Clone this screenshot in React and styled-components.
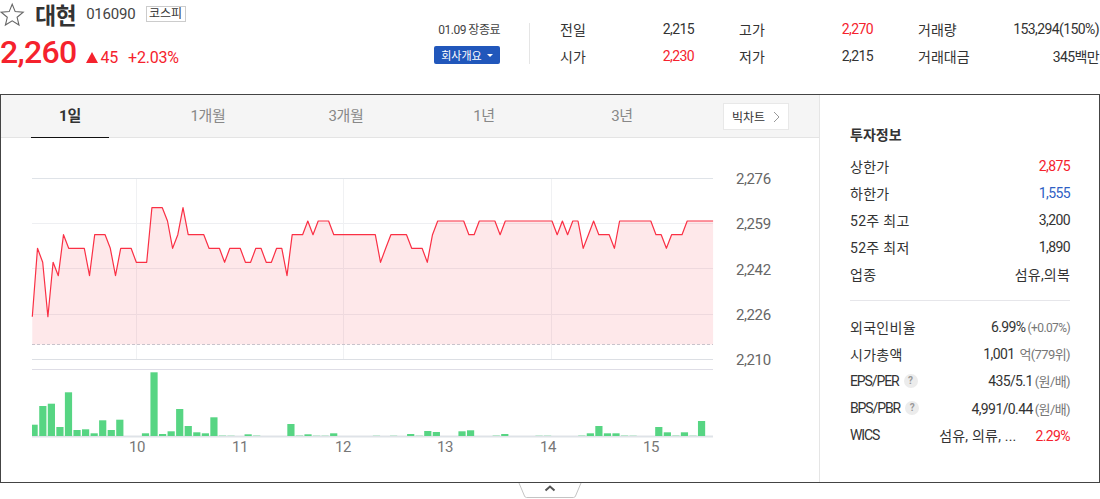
import styled, { createGlobalStyle } from 'styled-components'

const GlobalStyle = createGlobalStyle`
  html, body {
    margin: 0;
    padding: 0;
    background: #fff;
    overflow: hidden;
  }
  body {
    font-family: Roboto, "Noto Sans CJK KR", sans-serif;
    color: #333;
  }
  * { box-sizing: border-box; }
`;

const Page = styled.div`
  width: 1100px;
  height: 499px;
`;

const Header = styled.header`
  height: 94px;
  display: flex;
  align-items: flex-start;
`;

const Summary = styled.div`
  width: 434px;
  display: flex;
  flex-direction: column;
`;

const TitleRow = styled.div`
  height: 28px;
  display: flex;
  align-items: center;
`;

const Name = styled.h1`
  margin: 0 0 0 10px;
  font-size: 23px;
  font-weight: 700;
  letter-spacing: -0.6px;
  color: #333;
`;

const Code = styled.span`
  margin-left: 10px;
  font-size: 15px;
  letter-spacing: -0.2px;
  color: #444;
`;

const MarketTag = styled.span`
  margin-left: 10px;
  width: 40px;
  height: 16px;
  border: 1px solid #ccc;
  font-size: 12px;
  line-height: 14px;
  text-align: center;
  color: #333;
`;

const PriceRow = styled.div`
  margin-top: 3px;
  display: flex;
  align-items: baseline;
  color: #f5222d;
`;

const Price = styled.strong`
  font-size: 32px;
  font-weight: 500;
  line-height: 42px;
  letter-spacing: -0.7px;
`;

const Triangle = styled.i`
  margin-left: 10px;
  margin-right: 2px;
  width: 0;
  height: 0;
  border-left: 6px solid transparent;
  border-right: 6px solid transparent;
  border-bottom: 11px solid #f5222d;
`;

const Delta = styled.span`
  margin-right: ${(props) => props.gap || 0}px;
  font-size: 16px;
  letter-spacing: -0.2px;
`;

const Status = styled.div`
  width: 66px;
  padding-top: 21px;
  display: flex;
  flex-direction: column;
  align-items: flex-end;
`;

const StatusText = styled.span`
  font-size: 12px;
  line-height: 18px;
  white-space: nowrap;
  letter-spacing: -0.5px;
  color: #444;
`;

const CompanyButton = styled.button`
  margin-top: 7px;
  width: 66px;
  height: 18px;
  padding: 0;
  border: 0;
  border-radius: 2px;
  background: #2157bb;
  color: #fff;
  font-family: inherit;
  font-size: 11px;
  display: flex;
  align-items: center;
  justify-content: center;
  gap: 5px;
`;

const Caret = styled.i`
  width: 0;
  height: 0;
  border-left: 3px solid transparent;
  border-right: 3px solid transparent;
  border-top: 3px solid #fff;
`;

const Quotes = styled.div`
  margin: 23px 0 0 29px;
  padding: 0 0 2px 30px;
  height: 41px;
  border-left: 1px solid #e5e5e5;
  display: grid;
  grid-template-columns: 134px 134px 181px;
  column-gap: 45px;
  grid-auto-rows: 27px;
  align-content: center;
`;

const Quote = styled.div`
  display: flex;
  justify-content: space-between;
  align-items: center;
  font-size: 14px;
  white-space: nowrap;
`;

const Value = styled.span`
  letter-spacing: -0.6px;
  color: ${(props) => props.color || '#333'};
  margin-left: ${(props) => props.$gap || 0}px;
`;

const Board = styled.section`
  height: 389px;
  border: 1px solid #444;
  display: flex;
`;

const ChartPanel = styled.div`
  width: 819px;
  border-right: 1px solid #e5e5e5;
`;

const Tabs = styled.nav`
  height: 43px;
  position: relative;
  background: #f5f5f5;
  border-bottom: 1px solid #e4e4e4;
  display: flex;
`;

const Tab = styled.a`
  width: 138px;
  height: 43px;
  font-size: 15px;
  line-height: 42px;
  text-align: center;
  letter-spacing: -0.3px;
  color: ${(props) => (props.$active ? '#333' : '#888')};
  font-weight: ${(props) => (props.$active ? 700 : 400)};
  position: relative;
  &::after {
    content: '';
    display: ${(props) => (props.$active ? 'block' : 'none')};
    position: absolute;
    left: 30px;
    right: 30px;
    bottom: 0;
    height: 1px;
    background: #111;
  }
`;

const BigChart = styled.a`
  position: absolute;
  left: 722px;
  top: 8px;
  width: 66px;
  height: 27px;
  background: #fff;
  border: 1px solid #e8e8e8;
  font-size: 12px;
  color: #333;
  display: flex;
  align-items: center;
  justify-content: center;
  gap: 8px;
`;

const ChartSvg = styled.svg`
  display: block;
  width: 818px;
  height: 344px;
`;

const AxisText = styled.text`
  font-family: Roboto, sans-serif;
  font-size: 15px;
  letter-spacing: -0.4px;
  fill: ${(props) => props.color};
`;

const InfoPanel = styled.aside`
  flex: 1;
  padding: 28px 29px 0 30px;
`;

const InfoTitle = styled.h3`
  margin: 0 0 5px;
  font-size: 14px;
  line-height: 24px;
  font-weight: 700;
  color: #333;
`;

const InfoGroup = styled.div`
  padding-bottom: ${(props) => (props.$top ? 12 : 0)}px;
  margin-bottom: ${(props) => (props.$top ? 12 : 0)}px;
  border-bottom: ${(props) => (props.$top ? '1px solid #e6e6ea' : '0')};
`;

const InfoRow = styled.div`
  height: 27.2px;
  display: flex;
  align-items: center;
  justify-content: space-between;
  font-size: 14px;
  letter-spacing: -0.6px;
  white-space: nowrap;
  color: #333;
`;

const RowLabel = styled.span`
  display: flex;
  align-items: center;
  gap: 5px;
  letter-spacing: ${(props) => (props.$latin ? -1.1 : 0.3)}px;
`;

const Hangul = styled.span`
  letter-spacing: 0.2px;
`;

const Unit = styled.span`
  margin-left: 2px;
  font-size: ${(props) => props.size || 13}px;
  color: #777;
`;

const Help = styled.i`
  width: 14px;
  height: 14px;
  border-radius: 50%;
  background: #ececec;
  color: #999;
  font-size: 10px;
  font-style: normal;
  font-weight: 700;
  line-height: 14px;
  letter-spacing: 0;
  text-align: center;
`;

const Foot = styled.div`
  display: flex;
  justify-content: center;
`;

const StarIcon = () => (
  <svg width="25" height="25" viewBox="0 0 25 25" fill="none" stroke="#666" strokeWidth="1.1">
    <path d="M12.2 2.200l3 7.400 8 .6-6.100 5.100 1.900 7.700-6.800-4.200-6.800 4.200 1.900-7.700L1.200 10.200l8-.6z" />
  </svg>
);

// y of each price step, read off the reference at 3x
const LEVELS = { a: 203, b: 243, c: 284, d: 325, e: 367, f: 407, z: 530 };
const SERIES =
  'zdezefcddddfcccdfdddeeeaaabdcaccccdddedddeeddeeddfcccbcbbbcccccccccedcc' +
  'ccdddecbbbbbbccbbbbcbbbbbbbbbbcbcbbdcbcccdbbbbbbbccdcccbbbbbb';

const VOLUMES = [
  11.3, 30, 32.3, 9, 43.7, 6, 6.7, 2.7, 15.7, 6, 16.3, 0, 0, 2.7, 63.7, 2, 4.7, 27, 10, 3.7,
  2.7, 18.7, 1, 0.7, 0, 1.7, 1, 0, 0, 0, 12, 1, 1.7, 0.7, 0.7, 2.7, 0, 0, 0, 0,
  0.7, 0, 0.7, 0, 2, 0.7, 5, 4, 0, 0, 4.7, 5.7, 0, 0, 1, 2, 0, 0, 0, 0.7,
  0.7, 0, 0, 0, 1, 2.7, 10, 2.7, 2.7, 1, 0.7, 0, 0, 9, 3.7, 1, 3.7, 0.7, 15,
];

const linePoints = SERIES.split('').map((c, i) => [32.33 + i * 5.197, 140 + LEVELS[c] / 3]);
const linePath = linePoints.map(([x, y]) => `${x.toFixed(1)},${y.toFixed(1)}`).join(' ');
const lastX = linePoints[linePoints.length - 1][0].toFixed(1);
const areaPath = `32.3,344.5 ${linePath} ${lastX},344.5`;

const PRICE_TICKS = [
  ['2,276', 179],
  ['2,259', 224],
  ['2,242', 270],
  ['2,226', 315],
  ['2,210', 360],
];
const TIME_TICKS = [['10', 137], ['11', 240], ['12', 343], ['13', 445], ['14', 548], ['15', 651]];

const Chart = () => (
  <ChartSvg viewBox="1 138 818 344">
    <g fill="none">
      {[223.5, 268.5, 314.5].map((y) => (
        <line key={y} x1="32" x2="713" y1={y} y2={y} stroke="#eeeff2" />
      ))}
      {[136.5, 343.5, 551.5].map((x) => (
        <line key={x} x1={x} x2={x} y1="178" y2="359" stroke="#f0f1f3" />
      ))}
      <line x1="32" x2="713" y1="178.5" y2="178.5" stroke="#dfe3e8" />
      <line x1="32" x2="713" y1="359.5" y2="359.5" stroke="#dcdfe4" />
      <line x1="32" x2="713" y1="369.5" y2="369.5" stroke="#dedde6" />
      <polygon points={areaPath} fill="#f5283c" fillOpacity="0.105" />
      <line x1="32" x2="713" y1="344.5" y2="344.5" stroke="#c8c3cb" strokeDasharray="3 2" />
      <polyline points={linePath} stroke="#fa3045" strokeWidth="1.2" strokeLinejoin="round" />
      <line x1="32" x2="713" y1="436.5" y2="436.5" stroke="#dfe3e8" strokeWidth="2" />
    </g>
    {VOLUMES.map((h, i) =>
      h > 0 ? (
        <rect
          key={i}
          x={Math.max(30.67 + i * 8.555, 32)}
          y={436 - h}
          width={i === 0 ? 5.7 : 7.2}
          height={h}
          fill="#57d583"
          fillOpacity={h < 1.5 ? 0.35 : 1}
        />
      ) : null
    )}
    {PRICE_TICKS.map(([label, y]) => (
      <AxisText key={label} x="736" y={y + 5} color="#666">{label}</AxisText>
    ))}
    {TIME_TICKS.map(([label, x]) => (
      <AxisText key={label} x={x} y="452" textAnchor="middle" color="#777">{label}</AxisText>
    ))}
  </ChartSvg>
);

const Info = ({ label, help, latin, children }) => (
  <InfoRow>
    <RowLabel $latin={latin}>{label}{help && <Help>?</Help>}</RowLabel>
    <span>{children}</span>
  </InfoRow>
);

const App = () => (
  <Page>
    <GlobalStyle />
    <Header>
      <Summary>
        <TitleRow>
          <StarIcon />
          <Name>대현</Name>
          <Code>016090</Code>
          <MarketTag>코스피</MarketTag>
        </TitleRow>
        <PriceRow>
          <Price>2,260</Price>
          <Triangle />
          <Delta gap={10}>45</Delta>
          <Delta>+2.03%</Delta>
        </PriceRow>
      </Summary>
      <Status>
        <StatusText>01.09 장종료</StatusText>
        <CompanyButton>회사개요<Caret /></CompanyButton>
      </Status>
      <Quotes>
        <Quote>전일<Value>2,215</Value></Quote>
        <Quote>고가<Value color="#f5222d">2,270</Value></Quote>
        <Quote>거래량<Value>153,294(150%)</Value></Quote>
        <Quote>시가<Value color="#f5222d">2,230</Value></Quote>
        <Quote>저가<Value>2,215</Value></Quote>
        <Quote>거래대금<Value>345백만</Value></Quote>
      </Quotes>
    </Header>
    <Board>
      <ChartPanel>
        <Tabs>
          <Tab $active>1일</Tab>
          <Tab>1개월</Tab>
          <Tab>3개월</Tab>
          <Tab>1년</Tab>
          <Tab>3년</Tab>
          <BigChart>
            빅차트
            <svg width="7" height="12" viewBox="0 0 7 12" fill="none" stroke="#999" strokeWidth="1">
              <path d="M1 1l5 5-5 5" />
            </svg>
          </BigChart>
        </Tabs>
        <Chart />
      </ChartPanel>
      <InfoPanel>
        <InfoGroup $top>
          <InfoTitle>투자정보</InfoTitle>
          <Info label="상한가"><Value color="#f5222d">2,875</Value></Info>
          <Info label="하한가"><Value color="#2f5fc4">1,555</Value></Info>
          <Info label="52주 최고">3,200</Info>
          <Info label="52주 최저">1,890</Info>
          <Info label="업종"><Hangul>섬유,의복</Hangul></Info>
        </InfoGroup>
        <InfoGroup>
          <Info label="외국인비율">6.99%<Unit size={12}>(+0.07%)</Unit></Info>
          <Info label="시가총액">1,001 <Unit>억(779위)</Unit></Info>
          <Info label="EPS/PER" latin help>435/5.1<Unit>(원/배)</Unit></Info>
          <Info label="BPS/PBR" latin help>4,991/0.44<Unit>(원/배)</Unit></Info>
          <Info label="WICS" latin>
            <Hangul>섬유, 의류, ...</Hangul>
            <Value color="#f5222d" $gap={19}>2.29%</Value>
          </Info>
        </InfoGroup>
      </InfoPanel>
    </Board>
    <Foot>
      <svg width="64" height="16" viewBox="0 0 64 16" fill="none">
        <path d="M1 0l5.500 13q.6 1.500 2 1.500h47q1.400 0 2-1.500L63 0" stroke="#c4c4c4" />
        <path d="M27.500 7.500L32 3.500l4.500 4" stroke="#555" strokeWidth="2" />
      </svg>
    </Foot>
  </Page>
);

export default App;
